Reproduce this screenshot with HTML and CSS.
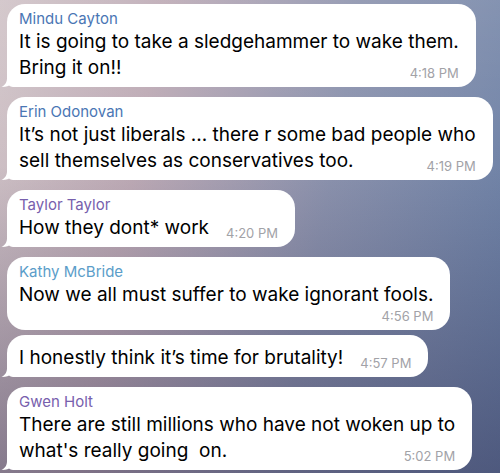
FILE: index.html
```html
<!DOCTYPE html>
<html lang="en">
<head>
    <meta charset="UTF-8">
    <title>Chat</title>
    <link rel="stylesheet" href="styles.css">
</head>
<body>
    <div class="chat">
        <!-- Mensagens do grupo -->
        <div class="bubble tail">
            <div class="name blue">Mindu Cayton</div>
            <div class="body">It is going to take a sledgehammer to wake them.<br>Bring it on!!<span class="time">4:18 PM</span></div>
        </div>

        <div class="bubble tail">
            <div class="name blue">Erin Odonovan</div>
            <div class="body">It’s not just liberals ... there r some bad people who<br>sell themselves as conservatives too.<span class="time">4:19 PM</span></div>
        </div>

        <div class="bubble tail">
            <div class="name purple">Taylor Taylor</div>
            <div class="body">How they dont* work<span class="time">4:20 PM</span></div>
        </div>

        <div class="bubble grouped">
            <div class="name sky">Kathy McBride</div>
            <div class="body">Now we all must suffer to wake ignorant fools.</div>
            <div class="time below">4:56 PM</div>
        </div>

        <div class="bubble tail no-name">
            <div class="body">I honestly think it’s time for brutality!<span class="time">4:57 PM</span></div>
        </div>

        <div class="bubble tail">
            <div class="name purple">Gwen Holt</div>
            <div class="body">There are still millions who have not woken up to<br>what's really going&nbsp; on.<span class="time">5:02 PM</span></div>
        </div>
    </div>
</body>
</html>
```

FILE: styles.css
```css
body {
    margin: 0;
    height: 473px;
    overflow: hidden;
    font-family: 'Inter', 'Roboto', sans-serif;
    background:
        linear-gradient(180deg, rgba(255, 255, 255, 0.1) 0%, rgba(255, 255, 255, 0) 35%, rgba(35, 30, 65, 0.4) 100%),
        linear-gradient(100deg, #d0c3c7 0%, #bdaab5 28%, #8b92ad 62%, #6a80a6 100%);
}

.chat {
    display: flex;
    flex-direction: column;
    align-items: flex-start;
    padding: 4px 0 0 7px;
}

.bubble {
    position: relative;
    background-color: #ffffff;
    border-radius: 18px;
    padding: 5px 17px 6px 12px;
    margin-bottom: 10px;
}

.bubble.grouped {
    margin-bottom: 5px;
}

.bubble.tail {
    border-bottom-left-radius: 6px;
}

/* Rabinho da bolha */
.bubble.tail::before {
    content: "";
    position: absolute;
    left: -6px;
    bottom: 0;
    width: 14px;
    height: 16px;
    background-color: #ffffff;
    clip-path: path("M6 0 L6 7 C6 11 4.5 14 0.5 16 C4.5 16.2 8 15 10.5 13 L14 16 L14 0 Z");
}

.bubble.no-name {
    padding-top: 10px;
}

.name {
    font-size: 15px;
    line-height: 20px;
    font-weight: 400;
}

.blue { color: #4a76b4; }
.purple { color: #7760ad; }
.sky { color: #5b9dc9; }

.body {
    display: flow-root;
    font-size: 19px;
    line-height: 26px;
    color: #000000;
    white-space: nowrap;
}

.time {
    float: right;
    margin: 10px 0 0 17px;
    font-size: 13px;
    line-height: 16px;
    color: #a2a2a7;
}

.time.below {
    float: none;
    display: block;
    text-align: right;
    margin: 0;
}
```
